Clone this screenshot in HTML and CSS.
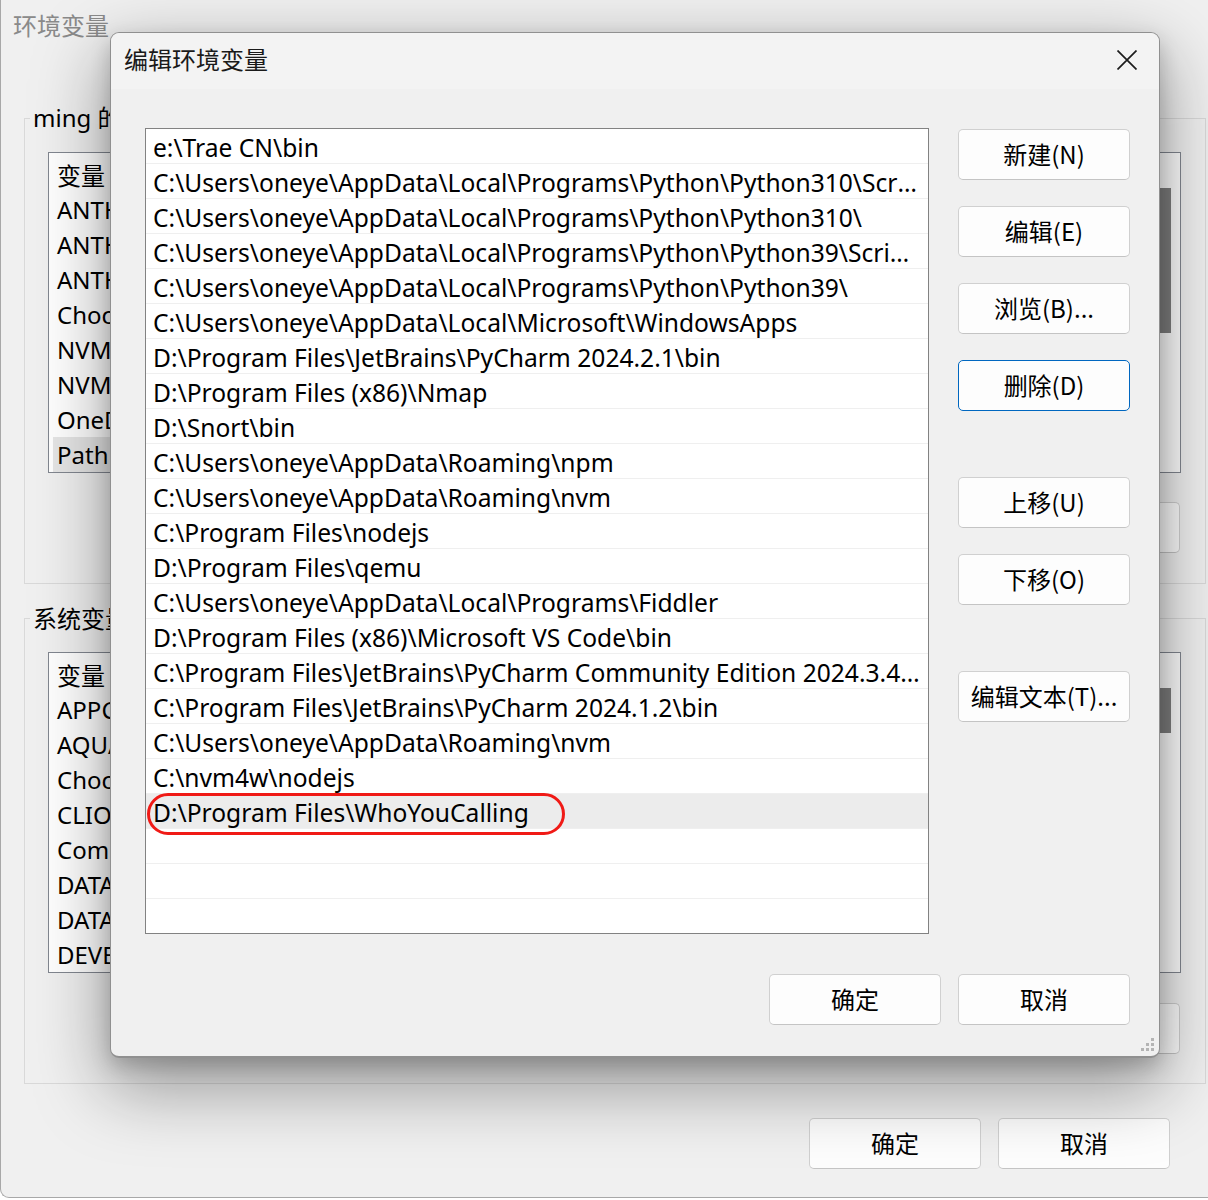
FILE: index.html
```html
<!DOCTYPE html>
<html lang="zh-CN">
<head>
<meta charset="utf-8">
<title>编辑环境变量</title>
<link rel="stylesheet" href="styles.css">
</head>
<body>
<div class="bgwin">
  <div class="bg-title">
    <span class="bg-title-text">环境变量</span>
    <svg class="bg-close" width="24" height="24" viewBox="0 0 24 24"><path d="M2 2 L22 22 M22 2 L2 22" stroke="#8c8c8c" stroke-width="1.6" fill="none"/></svg>
  </div>
  <div class="bg-content">
    <fieldset class="group">
      <legend>ming 的用户变量(U)</legend>
      <div class="bglist">
        <div class="bglist-body">
          <div class="bgrow hdr"><span class="c1">变量</span></div>
          <div class="bgrow"><span class="c1">ANTHROPIC_AUTH_TOKEN</span></div>
          <div class="bgrow"><span class="c1">ANTHROPIC_BASE_URL</span></div>
          <div class="bgrow"><span class="c1">ANTHROPIC_MODEL</span></div>
          <div class="bgrow"><span class="c1">ChocolateyLastPathUpdate</span></div>
          <div class="bgrow"><span class="c1">NVM_HOME</span></div>
          <div class="bgrow"><span class="c1">NVM_SYMLINK</span></div>
          <div class="bgrow"><span class="c1">OneDrive</span></div>
          <div class="bgrow sel"><span class="c1">Path</span></div>
        </div>
        <div class="bgscroll"><div class="thumb thumb1"></div></div>
      </div>
      <div class="bg-btnrow">
        <button class="btn ghost"></button>
        <button class="btn ghost"></button>
        <button class="btn ghost"></button>
      </div>
    </fieldset>
    <fieldset class="group group2">
      <legend>系统变量(S)</legend>
      <div class="bglist">
        <div class="bglist-body">
          <div class="bgrow hdr"><span class="c1">变量</span></div>
          <div class="bgrow"><span class="c1">APPCODE_VM_OPTIONS</span></div>
          <div class="bgrow"><span class="c1">AQUA_VM_OPTIONS</span></div>
          <div class="bgrow"><span class="c1">ChocolateyInstall</span></div>
          <div class="bgrow"><span class="c1">CLION_VM_OPTIONS</span></div>
          <div class="bgrow"><span class="c1">ComSpec</span></div>
          <div class="bgrow"><span class="c1">DATAGRIP_VM_OPTIONS</span></div>
          <div class="bgrow"><span class="c1">DATASPELL_VM_OPTIONS</span></div>
          <div class="bgrow"><span class="c1">DEVECOSTUDIO_VM_OPTIONS</span></div>
        </div>
        <div class="bgscroll"><div class="thumb thumb2"></div></div>
      </div>
      <div class="bg-btnrow">
        <button class="btn ghost"></button>
        <button class="btn ghost"></button>
        <button class="btn ghost"></button>
      </div>
    </fieldset>
    <div class="bg-footer">
      <button class="btn">确定</button>
      <button class="btn">取消</button>
    </div>
  </div>
</div>

<div class="dialog">
  <div class="dlg-title">
    <span class="dlg-title-text">编辑环境变量</span>
    <svg class="dlg-close" width="20" height="20" viewBox="0 0 20 20"><path d="M0.5 0.5 L19.5 19.5 M19.5 0.5 L0.5 19.5" stroke="#1c1c1c" stroke-width="1.7" fill="none"/></svg>
  </div>
  <div class="dlg-main">
    <div class="pathlist">
      <div class="prow">e:\Trae CN\bin</div>
      <div class="prow">C:\Users\oneye\AppData\Local\Programs\Python\Python310\Scripts\</div>
      <div class="prow">C:\Users\oneye\AppData\Local\Programs\Python\Python310\</div>
      <div class="prow">C:\Users\oneye\AppData\Local\Programs\Python\Python39\Scripts\</div>
      <div class="prow">C:\Users\oneye\AppData\Local\Programs\Python\Python39\</div>
      <div class="prow">C:\Users\oneye\AppData\Local\Microsoft\WindowsApps</div>
      <div class="prow">D:\Program Files\JetBrains\PyCharm 2024.2.1\bin</div>
      <div class="prow">D:\Program Files (x86)\Nmap</div>
      <div class="prow">D:\Snort\bin</div>
      <div class="prow">C:\Users\oneye\AppData\Roaming\npm</div>
      <div class="prow">C:\Users\oneye\AppData\Roaming\nvm</div>
      <div class="prow">C:\Program Files\nodejs</div>
      <div class="prow">D:\Program Files\qemu</div>
      <div class="prow">C:\Users\oneye\AppData\Local\Programs\Fiddler</div>
      <div class="prow">D:\Program Files (x86)\Microsoft VS Code\bin</div>
      <div class="prow">C:\Program Files\JetBrains\PyCharm Community Edition 2024.3.4\bin</div>
      <div class="prow">C:\Program Files\JetBrains\PyCharm 2024.1.2\bin</div>
      <div class="prow">C:\Users\oneye\AppData\Roaming\nvm</div>
      <div class="prow">C:\nvm4w\nodejs</div>
      <div class="prow selected">D:\Program Files\WhoYouCalling</div>
      <div class="prow"></div>
      <div class="prow"></div>
      <div class="prow"></div>
    </div>
    <div class="side-btns">
      <button class="btn">新建(N)</button>
      <button class="btn">编辑(E)</button>
      <button class="btn">浏览(B)...</button>
      <button class="btn focus">删除(D)</button>
      <button class="btn gap-lg">上移(U)</button>
      <button class="btn">下移(O)</button>
      <button class="btn gap-lg">编辑文本(T)...</button>
    </div>
  </div>
  <div class="dlg-footer">
    <button class="btn">确定</button>
    <button class="btn">取消</button>
  </div>
  <svg class="grip" width="18" height="18" viewBox="0 0 18 18">
    <rect x="12" y="2" width="3" height="3" fill="#b4b4b4"/>
    <rect x="7" y="7" width="3" height="3" fill="#b4b4b4"/>
    <rect x="12" y="7" width="3" height="3" fill="#b4b4b4"/>
    <rect x="2" y="12" width="3" height="3" fill="#b4b4b4"/>
    <rect x="7" y="12" width="3" height="3" fill="#b4b4b4"/>
    <rect x="12" y="12" width="3" height="3" fill="#b4b4b4"/>
  </svg>
</div>
<div class="mark"></div>
</body>
</html>
```

FILE: styles.css
```css
* { box-sizing: border-box; }
html, body {
  margin: 0;
  padding: 0;
  width: 1208px;
  height: 1200px;
  overflow: hidden;
  background: #ffffff;
  font-family: "Noto Sans", "Noto Sans CJK SC", sans-serif;
  color: #000;
}
.bgwin {
  width: 1240px;
  height: 1198px;
  background: #f0f0f0;
  border-left: 1px solid #a8a8a8;
  border-bottom: 1px solid #a8a8a8;
  border-bottom-left-radius: 9px;
  overflow: hidden;
}
.bg-title {
  height: 55px;
  display: flex;
  align-items: center;
  justify-content: space-between;
  padding: 0 26px 4px 12px;
  font-family: "Noto Sans CJK SC", sans-serif;
}
.bg-title-text {
  font-size: 24px;
  color: #8a8a8a;
  margin-top: -2px;
}
.bg-close { margin-top: -12px; margin-right: -22px; }
.bg-content {
  width: 1182px;
  margin-left: 23px;
}
.group {
  margin: 46px 0 0 0;
  padding: 0 24px 30px 0;
  border: 1px solid #d9d9d9;
  min-width: 0;
}
.group2 { margin-top: 17px; padding-bottom: 29px; }
.group2 .bg-btnrow { margin-top: 30px; }
.group legend {
  font-family: "Noto Sans", "Noto Sans CJK SC", sans-serif;
  font-size: 24px;
  line-height: 34px;
  height: 34px;
  padding: 0 3px;
  margin-left: 5px;
  color: #000;
  white-space: nowrap;
  max-width: 90px;
  overflow: hidden;
}
.group2 legend { font-family: "Noto Sans CJK SC", sans-serif; }
.bglist {
  margin: 17px 0 0 23px;
  height: 321px;
  border: 1px solid #828790;
  background: #fff;
  display: flex;
}
.bglist-body {
  flex: 1;
  padding: 4px 0 0 4px;
  overflow: hidden;
}
.bgrow {
  height: 35px;
  display: flex;
  align-items: center;
  font-size: 24px;
  white-space: nowrap;
}
.bgrow .c1 { width: 70px; padding-left: 4px; overflow: hidden; }
.bgrow.hdr { font-family: "Noto Sans CJK SC", sans-serif; }
.bgrow.sel { background: #e6e6e6; }
.bgscroll { width: 21px; }
.thumb {
  width: 12px;
  background: #808080;
}
.thumb1 { margin-top: 35px; height: 145px; }
.thumb2 { margin-top: 35px; height: 45px; }
.bg-btnrow {
  margin-top: 29px;
  display: flex;
  justify-content: flex-end;
  gap: 17px;
  padding-right: 1px;
}
.bg-footer {
  margin-top: 34px;
  display: flex;
  justify-content: flex-end;
  gap: 17px;
  padding-right: 36px;
}
.btn {
  width: 172px;
  height: 51px;
  background: #fdfdfd;
  border: 1px solid #d0d0d0;
  border-bottom-color: #c4c4c4;
  border-radius: 5px;
  font-family: "Noto Sans CJK SC", sans-serif;
  font-size: 24px;
  color: #000;
  padding: 0 0 2px 0;
  margin: 0;
}
.btn.focus { border: 1px solid #0067c0; }

/* dialog */
.dialog {
  position: absolute;
  left: 110px;
  top: 32px;
  width: 1050px;
  height: 1026px;
  background: #f0f0f0;
  border: 1px solid #909090;
  border-bottom-width: 2px;
  border-radius: 9px;
  box-shadow: 0 8px 20px rgba(0, 0, 0, 0.18), 0 26px 70px 6px rgba(0, 0, 0, 0.36);
  display: flex;
  flex-direction: column;
}
.dlg-title {
  height: 56px;
  display: flex;
  align-items: center;
  justify-content: space-between;
  padding: 0 22px 0 13px;
  background: #f3f3f3;
  border-radius: 9px 9px 0 0;
  font-family: "Noto Sans CJK SC", sans-serif;
}
.dlg-title-text {
  font-size: 24px;
  color: #1a1a1a;
  margin-top: -5px;
}
.dlg-close { margin-top: -3px; }
.dlg-main {
  margin-top: 39px;
  display: flex;
  padding-left: 34px;
  gap: 29px;
}
.pathlist {
  width: 784px;
  height: 806px;
  border: 1px solid #828282;
  background: #fff;
  overflow: hidden;
}
.prow {
  height: 35px;
  border-bottom: 1px solid #efefef;
  padding: 0 5px 0 7px;
  font-size: 24.6px;
  line-height: 37px;
  white-space: nowrap;
  overflow: hidden;
  text-overflow: ellipsis;
  color: #000;
}
.prow.selected { background: #ececec; }
.side-btns {
  display: flex;
  flex-direction: column;
  gap: 26px;
  padding-top: 1px;
}
.side-btns .btn.gap-lg { margin-top: 40px; }
.dlg-footer {
  margin-top: 40px;
  display: flex;
  justify-content: flex-end;
  gap: 17px;
  padding-right: 29px;
}
.grip {
  position: absolute;
  right: 2px;
  bottom: 2px;
}
.mark {
  position: absolute;
  left: 147px;
  top: 793px;
  width: 418px;
  height: 42px;
  border: 3px solid #f01a16;
  border-radius: 21px;
}
```
